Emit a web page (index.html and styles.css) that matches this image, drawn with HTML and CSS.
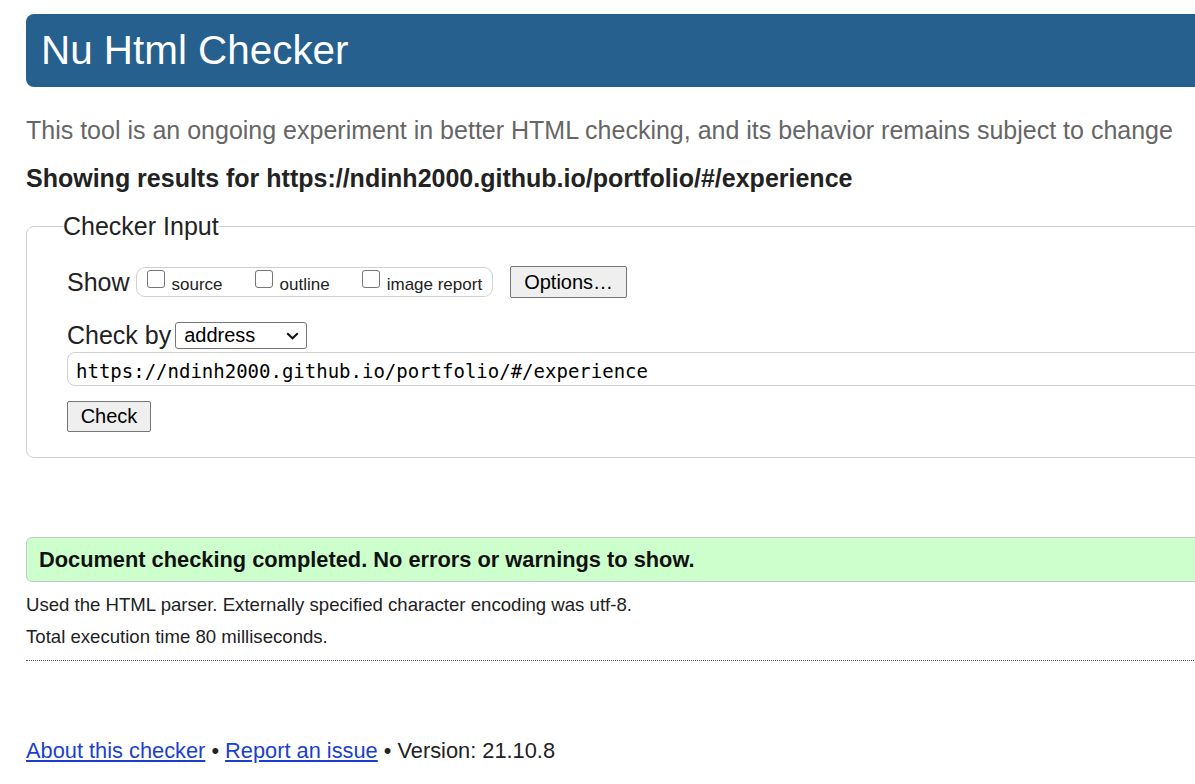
FILE: index.html
```html
<!DOCTYPE html>
<html lang="en">
<head>
<meta charset="utf-8">
<title>Nu Html Checker</title>
<link rel="stylesheet" href="styles.css">
</head>
<body>
<div class="page">
  <h1 class="banner">Nu Html Checker</h1>
  <p class="intro">This tool is an ongoing experiment in better HTML checking, and its behavior remains subject to change</p>
  <h2 class="results">Showing results for https://ndinh2000.github.io/portfolio/#/experience</h2>

  <fieldset class="checker">
    <legend class="checker-legend">Checker Input</legend>
    <div class="row row-show">
      <span class="row-label">Show</span>
      <div class="opts">
        <label class="opt"><span class="box"></span><span class="opt-text">source</span></label>
        <label class="opt"><span class="box"></span><span class="opt-text">outline</span></label>
        <label class="opt"><span class="box"></span><span class="opt-text">image report</span></label>
      </div>
      <button class="btn btn-options" type="button">Options…</button>
    </div>
    <div class="row row-by">
      <span class="row-label">Check by</span>
      <div class="select">
        <span class="select-text">address</span>
        <svg class="chev" width="13" height="8" viewBox="0 0 13 8"><path d="M1.2 1.2 L6.5 6.3 L11.8 1.2" fill="none" stroke="#111" stroke-width="2"/></svg>
      </div>
    </div>
    <input class="url" type="text" value="https://ndinh2000.github.io/portfolio/#/experience">
    <div class="row row-check">
      <button class="btn btn-check" type="button">Check</button>
    </div>
  </fieldset>

  <p class="success">Document checking completed. No errors or warnings to show.</p>
  <p class="meta">Used the HTML parser. Externally specified character encoding was utf-8.</p>
  <p class="meta">Total execution time 80 milliseconds.</p>
  <hr class="sep">

  <p class="footer"><a href="#">About this checker</a> • <a href="#">Report an issue</a> • Version: 21.10.8</p>
</div>
</body>
</html>
```
FILE: styles.css
```css
html, body {
  margin: 0;
  padding: 0;
  overflow: hidden;
  background: #fff;
}

body {
  font-family: "Liberation Sans", Arial, sans-serif;
  color: #222;
}

.page {
  width: 1400px;
  padding-left: 26px;
}

.banner {
  margin: 14px 0 0 0;
  height: 73px;
  line-height: 73px;
  font-size: 40.4px;
  font-weight: normal;
  color: #fff;
  background: #25608f;
  border-radius: 8px;
  padding-left: 15px;
}

.intro {
  margin: 28px 0 0 0;
  font-size: 25px;
  line-height: 30px;
  color: #666;
}

.results {
  margin: 18px 0 0 0;
  font-size: 25px;
  line-height: 30px;
  font-weight: bold;
  color: #222;
}

.checker {
  margin: 19px 0 0 0;
  padding: 26px 0 25px 36px;
  border: 1px solid #d0d0d0;
  border-radius: 8px;
  min-width: 0;
}

.checker-legend {
  padding: 0;
  font-size: 25px;
  line-height: 28px;
  color: #222;
}

.row {
  display: flex;
  align-items: center;
  margin-left: 4px;
}

.row-show {
  height: 32px;
}

.row-label {
  font-size: 25px;
  line-height: 28px;
  color: #222;
}

.opts {
  display: flex;
  align-items: center;
  height: 28px;
  margin-left: 6px;
  padding: 0 10px 0 10px;
  border: 1px solid #d0d0d0;
  border-radius: 9px;
}

.opt {
  display: flex;
  align-items: center;
  margin-left: 32px;
}

.opt:first-child {
  margin-left: 0;
}

.box {
  width: 16px;
  height: 16px;
  border: 1px solid #767676;
  border-radius: 3px;
  background: #fff;
  margin-right: 7px;
  position: relative;
  top: -3px;
}

.opt-text {
  font-size: 17px;
  line-height: 20px;
  color: #222;
  position: relative;
  top: 3px;
}

.btn {
  font-family: "Liberation Sans", Arial, sans-serif;
  font-size: 20px;
  color: #000;
  background: #efefef;
  border: 1px solid #767676;
  border-radius: 2px;
  padding: 0;
}

.btn-options {
  margin-left: 17px;
  width: 117px;
  height: 32px;
}

.row-by {
  height: 28px;
  margin-top: 23px;
}

.select {
  display: flex;
  align-items: center;
  justify-content: space-between;
  box-sizing: border-box;
  width: 132px;
  height: 27px;
  margin-left: 4px;
  padding: 0 7px 0 8px;
  border: 1px solid #767676;
  border-radius: 3px;
  background: #fff;
}

.select-text {
  font-size: 20px;
  color: #000;
}

.chev {
  display: block;
  margin-top: 1px;
}

.url {
  display: block;
  box-sizing: border-box;
  width: 1400px;
  height: 34px;
  margin: 3px 0 0 4px;
  padding: 4px 0 0 8px;
  border: 1px solid #d0d0d0;
  border-radius: 8px;
  font-family: "DejaVu Sans Mono", "Liberation Mono", monospace;
  font-size: 19px;
  color: #000;
  background: #fff;
  outline: none;
}

.row-check {
  margin-top: 15px;
}

.btn-check {
  width: 84px;
  height: 31px;
}

.success {
  margin: 79px 0 0 0;
  height: 43px;
  line-height: 44px;
  padding-left: 12px;
  font-size: 21.8px;
  font-weight: bold;
  color: #111;
  background: #ccffcc;
  border: 1px solid #bfcdbf;
  border-radius: 6px;
}

.meta {
  margin: 0;
  font-size: 18.6px;
  line-height: 32px;
  color: #222;
}

.success + .meta {
  margin-top: 7px;
}

.sep {
  margin: 7px 0 0 0;
  height: 0;
  border: 0;
  border-top: 1px dotted #555;
}

.footer {
  margin: 78px 0 0 0;
  font-size: 21.8px;
  line-height: 24px;
  color: #222;
}

.footer a {
  color: #1a3fd0;
  text-decoration: underline;
}
```
